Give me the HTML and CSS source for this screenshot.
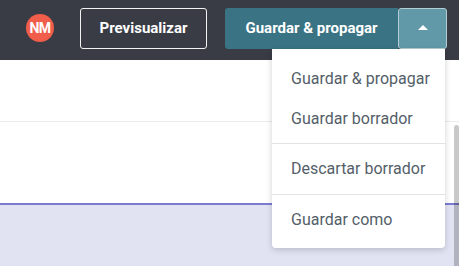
FILE: index.html
```html
<!DOCTYPE html>
<html lang="es">
<head>
<meta charset="utf-8">
<link rel="stylesheet" href="styles.css">
</head>
<body>
<header class="topbar">
  <div class="avatar">NM</div>
  <button class="btn-outline">Previsualizar</button>
  <div class="split">
    <button class="btn-main">Guardar &amp; propagar</button>
    <button class="btn-toggle"><span class="caret"></span></button>
    <div class="menu">
      <div class="menu-item">Guardar &amp; propagar</div>
      <div class="menu-item">Guardar borrador</div>
      <div class="menu-divider"></div>
      <div class="menu-item">Descartar borrador</div>
      <div class="menu-divider"></div>
      <div class="menu-item">Guardar como</div>
    </div>
  </div>
</header>
<main class="content">
  <section class="row-top"></section>
  <section class="row-mid"></section>
  <section class="row-bottom"></section>
  <div class="scroll-thumb"></div>
</main>
</body>
</html>
```
FILE: styles.css
```css
* { box-sizing: border-box; }
html, body { margin: 0; padding: 0; height: 100%; overflow: hidden; }
body {
  font-family: Roboto, "Liberation Sans", sans-serif;
  background: #e1e3f3;
}
.topbar {
  height: 60px;
  background: #393c45;
  display: flex;
  justify-content: flex-end;
  align-items: center;
  padding: 0 12px 4px 0;
}
.avatar {
  width: 28px;
  height: 28px;
  border-radius: 50%;
  background: #f05d4a;
  color: #fff;
  font-weight: 700;
  font-size: 14px;
  display: flex;
  align-items: center;
  justify-content: center;
  letter-spacing: -0.5px;
  margin-right: 26px;
}
button {
  font-family: inherit;
  cursor: pointer;
}
.btn-outline {
  height: 41px;
  width: 127px;
  background: transparent;
  border: 1px solid #f2f2f2;
  border-radius: 3px;
  color: #fff;
  font-weight: 700;
  font-size: 15px;
  margin-right: 18px;
}
.split {
  position: relative;
  display: flex;
}
.btn-main {
  height: 41px;
  width: 173px;
  background: #3a7384;
  border: none;
  border-radius: 3px 0 0 3px;
  color: #fff;
  font-weight: 700;
  font-size: 15px;
  padding: 0;
}
.btn-toggle {
  height: 41px;
  width: 49px;
  background: #6199a8;
  border: 1px solid #b4ccd3;
  border-radius: 3px;
  display: flex;
  align-items: center;
  justify-content: center;
  padding: 0;
}
.caret {
  width: 0;
  height: 0;
  border-left: 5px solid transparent;
  border-right: 5px solid transparent;
  border-bottom: 5px solid #fff;
  margin-bottom: 1px;
}
.menu {
  position: absolute;
  top: 41px;
  right: 2px;
  width: 173px;
  background: #fff;
  border-radius: 0 0 4px 4px;
  box-shadow: 0 2px 6px rgba(0, 0, 0, 0.18);
  padding: 10px 0 8px;
  z-index: 10;
}
.menu-item {
  height: 40px;
  line-height: 40px;
  padding: 0 19px;
  font-size: 16px;
  color: #545e69;
  white-space: nowrap;
}
.menu-divider {
  height: 1px;
  background: #e3e3e3;
  margin: 4px 0 5px;
}
.menu-divider + .menu-item + .menu-divider { margin-top: 5px; }
.content {
  position: relative;
}
.row-top {
  height: 62px;
  background: #fff;
  border-bottom: 1px solid #ebebeb;
}
.row-mid {
  height: 83px;
  background: #fff;
  border-bottom: 2px solid #7b7bd1;
}
.row-bottom {
  height: 61px;
  background: #e1e3f3;
}
.scroll-thumb {
  position: absolute;
  right: 0;
  top: 65px;
  width: 5px;
  bottom: 0;
  background: rgba(0, 0, 0, 0.21);
  border-radius: 3px 3px 0 0;
}
```
